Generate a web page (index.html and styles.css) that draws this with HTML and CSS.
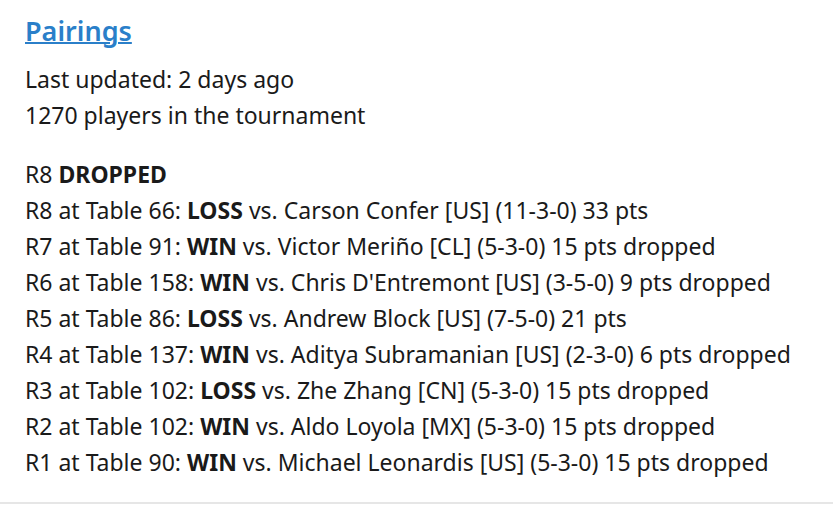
FILE: index.html
```html
<!DOCTYPE html>
<html>
<head>
<meta charset="utf-8">
<link rel="stylesheet" href="styles.css">
</head>
<body>
<section class="card">
  <h2 class="title"><a href="#">Pairings</a></h2>
  <div class="meta">
    <div>Last updated: 2 days ago</div>
    <div>1270 players in the tournament</div>
  </div>
  <div class="rounds">
    <div>R8 <b>DROPPED</b></div>
    <div>R8 at Table 66: <b>LOSS</b> vs. Carson Confer [US] (11-3-0) 33 pts</div>
    <div>R7 at Table 91: <b>WIN</b> vs. Victor Meriño [CL] (5-3-0) 15 pts dropped</div>
    <div>R6 at Table 158: <b>WIN</b> vs. Chris D'Entremont [US] (3-5-0) 9 pts dropped</div>
    <div>R5 at Table 86: <b>LOSS</b> vs. Andrew Block [US] (7-5-0) 21 pts</div>
    <div>R4 at Table 137: <b>WIN</b> vs. Aditya Subramanian [US] (2-3-0) 6 pts dropped</div>
    <div>R3 at Table 102: <b>LOSS</b> vs. Zhe Zhang [CN] (5-3-0) 15 pts dropped</div>
    <div>R2 at Table 102: <b>WIN</b> vs. Aldo Loyola [MX] (5-3-0) 15 pts dropped</div>
    <div>R1 at Table 90: <b>WIN</b> vs. Michael Leonardis [US] (5-3-0) 15 pts dropped</div>
  </div>
</section>
</body>
</html>
```
FILE: styles.css
```css
html, body {
  margin: 0;
  padding: 0;
  background: #fff;
}
body {
  font-family: "Noto Sans", "Open Sans", sans-serif;
  color: #1a1a1a;
  font-size: 23px;
  line-height: 36px;
}
.card {
  padding: 9px 25px 22px;
  border-bottom: 2px solid #e6e6e6;
}
.title {
  margin: 0 0 8px;
  font-size: 27px;
  font-weight: 600;
  line-height: 44px;
}
.title a {
  color: #2a7fc9;
  text-decoration: underline;
  text-decoration-thickness: 2px;
}
.meta {
  margin-bottom: 23px;
}
.rounds b {
  font-weight: 700;
}
```
